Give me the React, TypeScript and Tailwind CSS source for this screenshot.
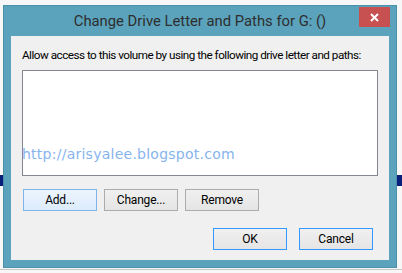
import React from 'react';

const ui = { fontFamily: 'Roboto, "Liberation Sans", sans-serif' };

function Btn({ label, variant = 'normal' }: { label: string; variant?: 'normal' | 'hover' | 'default' }) {
  const look =
    variant === 'hover'
      ? 'border-[#7eb4ea] bg-gradient-to-b from-[#ecf4fc] to-[#dcecfc]'
      : variant === 'default'
        ? 'border-[#3399ff] bg-gradient-to-b from-[#f0f0f0] to-[#e5e5e5]'
        : 'border-[#acacac] bg-gradient-to-b from-[#f0f0f0] to-[#e5e5e5]';
  return (
    <button className={`flex h-[22px] w-[74px] items-center justify-center border text-[12px] leading-none tracking-[-0.2px] text-black ${look}`}>
      {label}
    </button>
  );
}

export default function App() {
  return (
    <div className="relative h-[273px] w-[402px] overflow-hidden bg-[#f7f7f7]" style={ui}>
      {/* bits of the window behind */}
      <div className="absolute left-0 top-[175px] h-[11px] w-[4px] bg-[#0a1f7a]" />
      <div className="absolute right-0 top-[175px] h-[11px] w-[6px] bg-[#0a1f7a]" />
      <div className="absolute bottom-[3px] left-0 h-px w-full bg-[#c8c8c8]" />

      <div className="pl-[3px] pt-[5px]">
        <div className="relative flex h-[263px] w-[394px] flex-col border border-[#4b91a9] bg-[#5ba3bc]">
          <div className="flex h-[30px] items-start">
            <div className="flex h-[30px] flex-1 items-center justify-center text-[14.8px] text-[#2e2e2e]">
              Change Drive Letter and Paths for G: ()
            </div>
            <div className="absolute right-[6px] top-[1px] flex h-[20px] w-[31px] items-center justify-center bg-[#c75050]">
              <svg width="9" height="9" viewBox="0 0 9 9">
                <path d="M1 1 L8 8 M8 1 L1 8" stroke="#fff" strokeWidth="2" />
              </svg>
            </div>
          </div>

          <div className="relative mx-[7px] flex h-[224px] flex-col bg-[#f0f0f0] px-[11px] pt-[11px]">
            <div className="h-[16px] whitespace-nowrap text-[11.7px] leading-[16px] tracking-[-0.5px] text-black">
              Allow access to this volume by using the following drive letter and paths:
            </div>
            <div className="mt-[7px] h-[106px] w-[356px] border border-[#828790] bg-white" />

            <div className="mt-[13px] flex gap-[7px] pl-[1px]">
              <Btn label="Add..." variant="hover" />
              <Btn label="Change..." />
              <Btn label="Remove" />
            </div>

            <div className="mt-[17px] flex justify-end gap-[12px] pr-[5px]">
              <Btn label="OK" variant="default" />
              <Btn label="Cancel" variant="default" />
            </div>

            <div
              className="absolute left-[11px] top-[110px] whitespace-nowrap text-[14px] leading-[16px] tracking-[0.25px] text-[#86b4ee]"
              style={{ fontFamily: '"DejaVu Sans", Verdana, sans-serif' }}
            >
              http://arisyalee.blogspot.com
            </div>
          </div>
        </div>
      </div>
    </div>
  );
}
